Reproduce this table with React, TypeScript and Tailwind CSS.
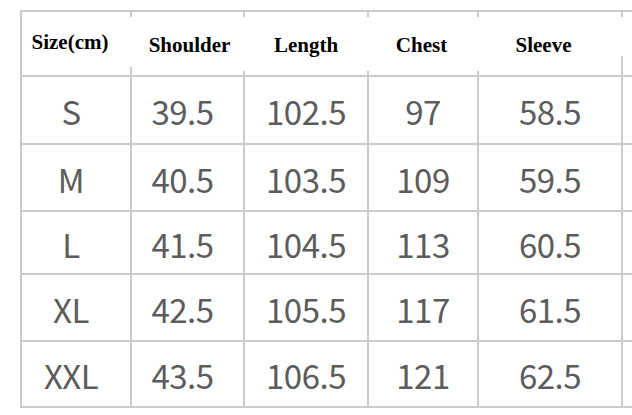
const headers = ['Size(cm)', 'Shoulder', 'Length', 'Chest', 'Sleeve', ''];

// bottom segment length of each faint divider in the header row
const tails = [8, 4, 4, 4, 19];
// small nudges so the labels sit where the original sheet had them
const headPad = ['pr-[12px]', 'pl-[4px]', '', 'pr-[3px]', 'pr-[13px]', ''];
const cellPad = ['pr-[10px]', 'pr-[10px]', '', '', '', ''];

const rows: { cells: string[]; h: string }[] = [
  { cells: ['S', '39.5', '102.5', '97', '58.5', ''], h: 'h-[68px]' },
  { cells: ['M', '40.5', '103.5', '109', '59.5', ''], h: 'h-[67px]' },
  { cells: ['L', '41.5', '104.5', '113', '60.5', ''], h: 'h-[63px]' },
  { cells: ['XL', '42.5', '105.5', '117', '61.5', ''], h: 'h-[67px]' },
  { cells: ['XXL', '43.5', '106.5', '121', '62.5', ''], h: 'h-[66px]' },
];

const cols = 'grid grid-cols-[110px_113px_124px_110px_144px_1fr]';

export default function App() {
  return (
    <div className="w-[632px] h-[415px] overflow-hidden bg-white pt-[10px] pl-[20px]">
      <div className="w-[640px] border-t-2 border-l-2 border-[#cbcbcb]">
        <div className={`${cols} h-[65px]`}>
          {headers.map((t, i) => (
            <div key={i} className="flex border-b-2 border-[#cbcbcb]">
              <div
                className={`flex-1 flex justify-center font-['Liberation_Serif',serif] font-bold text-[21px] text-black ${
                  i === 0 ? 'pt-[15px]' : 'pt-[18px]'
                } ${headPad[i]}`}
              >
                {t}
              </div>
              {i < 5 && (
                <div className="w-[2px] flex flex-col">
                  <div className="h-[5px] bg-[#cbcbcb]" />
                  <div className="flex-1" />
                  <div className="bg-[#cbcbcb]" style={{ height: tails[i] }} />
                </div>
              )}
            </div>
          ))}
        </div>
        {rows.map((r, ri) => (
          <div key={ri} className={`${cols} ${r.h}`}>
            {r.cells.map((c, ci) => (
              <div
                key={ci}
                className={`flex items-center justify-center pt-[4px] border-b-2 border-r-2 border-[#cbcbcb] font-['Noto_Sans_CJK_SC',sans-serif] text-[33px] tracking-[-0.5px] text-[#5c5c5c] ${cellPad[ci]}`}
              >
                {c}
              </div>
            ))}
          </div>
        ))}
      </div>
    </div>
  );
}
